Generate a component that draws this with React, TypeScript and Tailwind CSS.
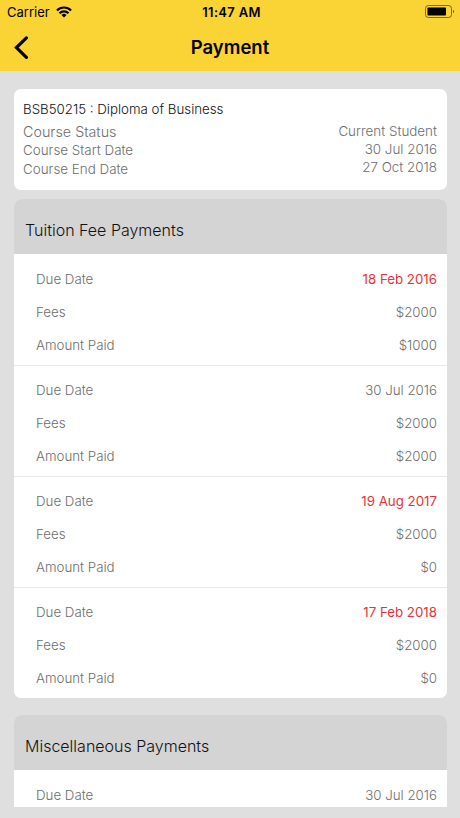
import clsx from 'clsx'

type Payment = { due: string; fees?: string; paid?: string; overdue?: boolean }

const tuition: Payment[] = [
  { due: '18 Feb 2016', fees: '$2000', paid: '$1000', overdue: true },
  { due: '30 Jul 2016', fees: '$2000', paid: '$2000' },
  { due: '19 Aug 2017', fees: '$2000', paid: '$0', overdue: true },
  { due: '17 Feb 2018', fees: '$2000', paid: '$0', overdue: true }
]

const miscellaneous: Payment[] = [{ due: '30 Jul 2016' }]

function StatusBar() {
  return (
    <div className="grid h-6 grid-cols-3 items-center pl-[7px] pr-[5px] text-[13px] leading-6">
      <div className="flex items-center gap-[6px]">
        <span>Carrier</span>
        <svg width="16" height="12" viewBox="0 0 16 12" fill="none" stroke="black" strokeWidth="2.1">
          <path d="M0.9 4.4a10.2 10.2 0 0 1 14.2 0" />
          <path d="M3.5 7.2a6.4 6.4 0 0 1 9 0" />
          <path d="M8 11.6 5.5 9a3.6 3.6 0 0 1 5 0Z" fill="black" stroke="none" />
        </svg>
      </div>
      <span className="pl-px text-center font-semibold tracking-[0.3px]">11:47 AM</span>
      <svg className="justify-self-end" width="30" height="14" viewBox="0 0 30 14">
        <rect x="0.5" y="0.5" width="26" height="12" rx="3" fill="none" stroke="black" strokeOpacity="0.5" />
        <rect x="2.5" y="2.5" width="18.5" height="8" rx="0.8" />
        <path d="M28 4.7v3.6c1.3-.6 1.3-3 0-3.6Z" fillOpacity="0.6" />
      </svg>
    </div>
  )
}

function Header() {
  return (
    <header className="h-[71px] shrink-0 bg-[#fad335] text-black">
      <StatusBar />
      <div className="grid h-[47px] grid-cols-3 items-center px-[14px]">
        <svg width="15" height="24" viewBox="0 0 15 24" fill="none" stroke="black" strokeWidth="3.2" strokeLinecap="round">
          <path d="M12.4 1.9 2.4 11.6l10 9.8" />
        </svg>
        <h1 className="pb-px text-center text-[18.5px] font-semibold leading-6">Payment</h1>
      </div>
    </header>
  )
}

function CourseCard() {
  return (
    <section className="flex h-[101px] justify-between rounded-[7px] bg-white pl-[9px] pr-[10px] text-[13.4px] text-[#6e6e6e]">
      <div className="pt-[11px]">
        <h2 className="h-5 whitespace-nowrap text-[13.3px] leading-[19px] text-[#111]">BSB50215 : Diploma of Business</h2>
        <p className="h-[21px] text-[14.3px] leading-[23px]">Course Status</p>
        <p className="leading-[19px]">Course Start Date</p>
        <p className="leading-[19px]">Course End Date</p>
      </div>
      <div className="pt-[33px] text-right leading-[18px]">
        <p>Current Student</p>
        <p>30 Jul 2016</p>
        <p>27 Oct 2018</p>
      </div>
    </section>
  )
}

function Row({ label, value, red }: { label: string; value: string; red?: boolean }) {
  return (
    <div className="flex h-[33px] items-center justify-between">
      <span>{label}</span>
      <span className={clsx(red && 'font-normal text-[#e53437]')}>{value}</span>
    </div>
  )
}

function PaymentSection({ title, payments, className }: { title: string; payments: Payment[]; className?: string }) {
  return (
    <section className={clsx('overflow-hidden rounded-[7px] bg-white', className)}>
      <h2 className="h-[55px] bg-[#d4d4d4] pl-[11px] text-[16px] leading-[62px] text-[#111]">{title}</h2>
      {payments.map((p) => (
        <div
          key={p.due}
          className="h-[111px] border-t border-[#e8e8e8] pl-[22px] pr-[10px] pt-2 text-[13.3px] text-[#6e6e6e] first-of-type:border-white"
        >
          <Row label="Due Date" value={p.due} red={p.overdue} />
          {p.fees && <Row label="Fees" value={p.fees} />}
          {p.paid && <Row label="Amount Paid" value={p.paid} />}
        </div>
      ))}
    </section>
  )
}

export default function App() {
  return (
    <div className="flex h-screen flex-col overflow-hidden bg-[#dfdfdf] font-['Inter',sans-serif]">
      <Header />
      <main className="mb-[11px] min-h-0 flex-1 overflow-hidden pl-[14px] pr-[13px] pt-[18px] font-light">
        <CourseCard />
        <PaymentSection className="mt-[9px]" title="Tuition Fee Payments" payments={tuition} />
        <PaymentSection className="mt-[17px]" title="Miscellaneous Payments" payments={miscellaneous} />
      </main>
    </div>
  )
}
